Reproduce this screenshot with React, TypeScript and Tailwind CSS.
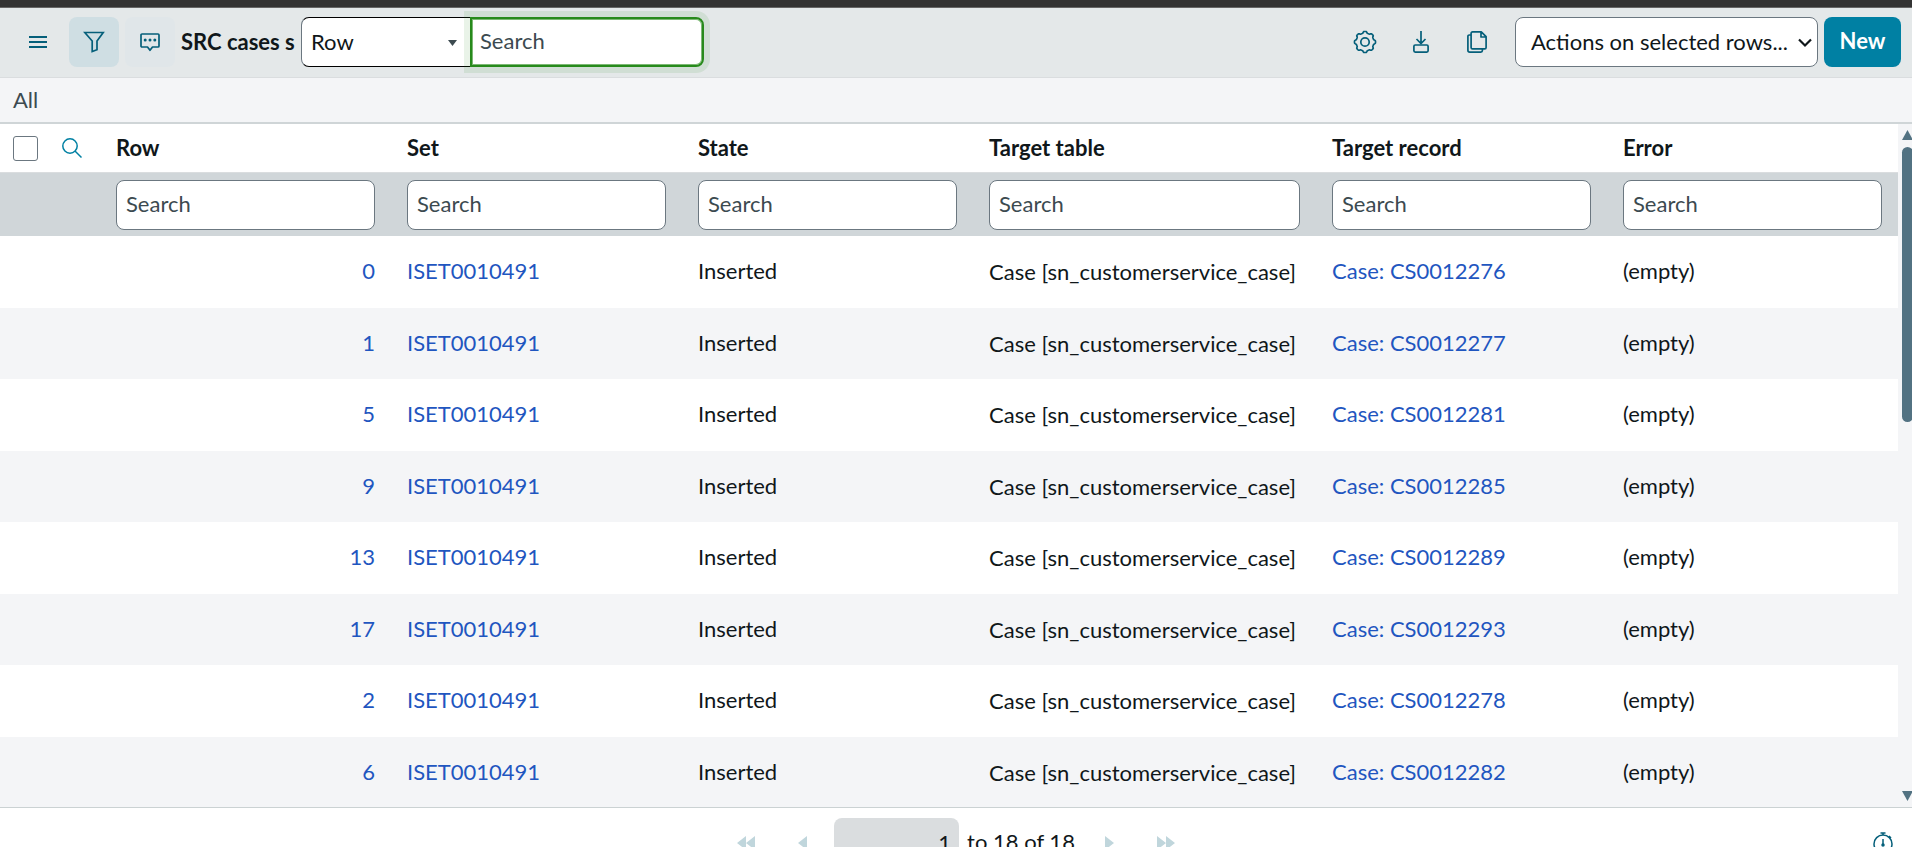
import React from "react";

const rows = [
  { row: 0, record: "CS0012276" },
  { row: 1, record: "CS0012277" },
  { row: 5, record: "CS0012281" },
  { row: 9, record: "CS0012285" },
  { row: 13, record: "CS0012289" },
  { row: 17, record: "CS0012293" },
  { row: 2, record: "CS0012278" },
  { row: 6, record: "CS0012282" },
];

const columns = ["Row", "Set", "State", "Target table", "Target record", "Error"];

// Outline of an eight-toothed gear centred on (12, 12).
const gearPoints = Array.from({ length: 96 }, (_, i) => {
  const angle = (i / 96) * Math.PI * 2;
  const wave = Math.max(-0.8, Math.min(0.8, 1.4 * Math.cos(8 * angle)));
  const radius = 9.7 + wave;
  return `${(12 + radius * Math.cos(angle)).toFixed(2)},${(12 + radius * Math.sin(angle)).toFixed(2)}`;
}).join(" ");

function IconButton({ label, className = "", children }: { label: string; className?: string; children: React.ReactNode }) {
  return (
    <button type="button" aria-label={label} className={`flex size-[50px] shrink-0 items-center justify-center rounded-lg text-[#055f7a] ${className}`}>
      {children}
    </button>
  );
}

function Header() {
  return (
    <header className="flex h-[70px] shrink-0 items-center border-b border-[#dadddf] bg-[#e4e8e9] pr-[11px] pb-[2px] pl-[13px]">
      <IconButton label="List controls">
        <svg width="18" height="12" viewBox="0 0 18 12" stroke="currentColor" strokeWidth="2" fill="none">
          <path d="M0 1h18M0 6h18M0 11h18" />
        </svg>
      </IconButton>
      <IconButton label="Filter" className="ml-[6px] bg-[#cfdee3] text-[#0b2f3c]">
        <svg width="22" height="22" viewBox="0 0 22 22" fill="none" stroke="currentColor" strokeWidth="1.700">
          <path d="M1.800 1.500h18.400L14 10v8.700l-4.800 1.800V10z" />
        </svg>
      </IconButton>
      <IconButton label="Activity" className="ml-[6px] bg-[#e0e6e9]">
        <svg width="20" height="20" viewBox="0 0 20 20" fill="none" stroke="currentColor" strokeWidth="1.700" strokeLinejoin="round">
          <path d="M2 2h16a1 1 0 0 1 1 1v11a1 1 0 0 1-1 1h-5.500L10 18.300 7.500 15H2a1 1 0 0 1-1-1V3a1 1 0 0 1 1-1z" />
          <g fill="currentColor" stroke="none">
            <circle cx="5.200" cy="8" r="1.500" />
            <circle cx="10" cy="8" r="1.500" />
            <circle cx="14.800" cy="8" r="1.500" />
          </g>
        </svg>
      </IconButton>
      <h1 className="ml-[6px] w-[120px] text-[22px] font-bold whitespace-nowrap">SRC cases s</h1>
      <div className="flex">
        <div className="relative">
          <select aria-label="Search field" className="h-[50px] w-[169px] appearance-none rounded-l-lg border-y border-l border-y-black border-l-[#6b7780] bg-white pl-[9px] text-[22px]">
            <option>Row</option>
          </select>
          <svg className="pointer-events-none absolute top-[23px] right-[13px] text-[#3c4a50]" width="9" height="6" viewBox="0 0 9 6" fill="currentColor">
            <path d="M0 0h9L4.500 6z" />
          </svg>
        </div>
        <input aria-label="Search" autoFocus placeholder="Search" className="relative h-[50px] w-[234px] rounded-r-lg border-2 border-[#278a1b] bg-white px-2 pb-[2px] text-[22px] shadow-[0_0_0_6px_rgba(39,138,27,0.1)] ring-1 ring-[#7cb874] outline-none ring-inset placeholder:text-[#3c4a50]" />
      </div>
      <div className="ml-auto flex items-center">
        <IconButton label="Settings">
          <svg width="24" height="24" viewBox="0 0 24 24" fill="none" stroke="currentColor" strokeWidth="1.700" strokeLinejoin="round">
            <polygon points={gearPoints} />
            <circle cx="12" cy="12" r="4.200" />
          </svg>
        </IconButton>
        <IconButton label="Download" className="ml-[6px]">
          <svg width="16" height="22" viewBox="0 0 16 22" fill="none" stroke="currentColor" strokeWidth="1.700">
            <path d="M8 0v12.300M3.500 8 8 12.500 12.500 8" />
            <rect x="0.900" y="14" width="14.200" height="7.100" rx="1.300" />
          </svg>
        </IconButton>
        <IconButton label="Copy" className="ml-[6px]">
          <svg width="20" height="22" viewBox="0 0 20 22" fill="none" stroke="currentColor" strokeWidth="1.700" strokeLinejoin="round">
            <path d="M5.500.9h8.800l4.800 4.800v10.800a1.400 1.400 0 0 1-1.400 1.400H5.500a1.400 1.400 0 0 1-1.400-1.400V2.300A1.400 1.400 0 0 1 5.500.9zM14 1v5h5M4.100 4H2.200A1.300 1.300 0 0 0 .9 5.300v13.900a1.900 1.900 0 0 0 1.900 1.900h11a1.600 1.600 0 0 0 1.600-1.600v-1.600" />
          </svg>
        </IconButton>
        <div className="relative ml-[13px]">
          <select aria-label="Actions on selected rows" className="h-[50px] w-[303px] appearance-none rounded-lg border border-[#6b7780] bg-white pl-[15px] text-[22px]">
            <option>Actions on selected rows...</option>
          </select>
          <svg className="pointer-events-none absolute top-[21px] right-[6px]" width="14" height="10" viewBox="0 0 14 10" fill="none" stroke="currentColor" strokeWidth="2.200">
            <path d="m1 1.500 6 6 6-6" />
          </svg>
        </div>
        <button type="button" className="ml-[6px] h-[50px] w-[77px] rounded-lg bg-[#0080a3] pb-[2px] text-[22px] font-bold text-white">New</button>
      </div>
    </header>
  );
}

function CaseTable() {
  return (
    <table className="w-full table-fixed border-separate border-spacing-0 text-left">
      <colgroup>
        <col className="w-[100px]" />
        <col />
        <col />
        <col />
        <col className="w-[343px]" />
        <col />
        <col />
      </colgroup>
      <thead>
        <tr className="h-[49px]">
          <td className="border-b border-[#dadddf] p-0">
            <div className="flex items-center pl-[13px]">
              <input type="checkbox" aria-label="Select all rows" className="size-[25px] appearance-none rounded-[3px] border border-[#6b7780] bg-white" />
              <button type="button" aria-label="Toggle column search" className="ml-6 text-[#0080a3]">
                <svg width="20" height="20" viewBox="0 0 20 20" fill="none" stroke="currentColor" strokeWidth="1.500">
                  <circle cx="8" cy="8" r="7.200" />
                  <path d="m13 13 6.500 6.500" />
                </svg>
              </button>
            </div>
          </td>
          {columns.map((name) => (
            <th key={name} scope="col" className="border-b border-[#dadddf] px-4 py-0 font-bold">{name}</th>
          ))}
        </tr>
        <tr className="h-[63px] bg-[#d0d6d9]">
          <td />
          {columns.map((name) => (
            <td key={name} className="px-4 py-0">
              <input aria-label={`Search ${name}`} placeholder="Search" className="block h-[50px] w-full rounded-lg border border-[#6b7780] bg-white px-[9px] pb-[2px] placeholder:text-[#3c4a50]" />
            </td>
          ))}
        </tr>
      </thead>
      <tbody>
        {rows.map(({ row, record }) => (
          <tr key={row} className="h-[72px] even:h-[71px] even:bg-[#f4f5f7]">
            <td />
            <td className="px-4 pt-0 pb-[2px] text-right"><a href="#row" className="text-[#1f56c0]">{row}</a></td>
            <td className="px-4 pt-0 pb-[2px]"><a href="#set" className="text-[#1f56c0]">ISET0010491</a></td>
            <td className="px-4 pt-0 pb-[2px]">Inserted</td>
            <td className="px-4 py-0 whitespace-nowrap">Case [sn_customerservice_case]</td>
            <td className="px-4 pt-0 pb-[2px]"><a href="#record" className="text-[#1f56c0]">Case: {record}</a></td>
            <td className="px-4 pt-0 pb-[2px]">(empty)</td>
          </tr>
        ))}
      </tbody>
    </table>
  );
}

function Footer() {
  return (
    <footer className="relative flex h-10 shrink-0 items-start justify-center overflow-hidden border-t border-[#cbd2d3] bg-white pt-[10px]">
      <div className="flex h-[50px] items-center text-[#c0d6dc]">
        <button type="button" aria-label="First page">
          <svg width="18" height="14" viewBox="0 0 18 14" fill="currentColor"><path d="M9 0v14L0 7zM18 0v14L9 7z" /></svg>
        </button>
        <button type="button" aria-label="Previous page" className="ml-[43px]">
          <svg width="9" height="14" viewBox="0 0 9 14" fill="currentColor"><path d="M9 0v14L0 7z" /></svg>
        </button>
        <input aria-label="First row" defaultValue="1" className="ml-[27px] h-[50px] w-[125px] rounded-lg bg-[#dadddf] px-2 pb-[2px] text-right text-[#10171a]" />
        <span className="ml-2 pb-[2px] text-[#10171a]">to 18 of 18</span>
        <button type="button" aria-label="Next page" className="ml-[30px]">
          <svg width="9" height="14" viewBox="0 0 9 14" fill="currentColor"><path d="M0 0v14l9-7z" /></svg>
        </button>
        <button type="button" aria-label="Last page" className="ml-[43px]">
          <svg width="18" height="14" viewBox="0 0 18 14" fill="currentColor"><path d="M0 0v14l9-7zM9 0v14l9-7z" /></svg>
        </button>
      </div>
      <button type="button" aria-label="Response time" className="absolute top-6 right-[19px] text-[#055f7a]">
        <svg width="20" height="24" viewBox="0 0 20 24" fill="none" stroke="currentColor" strokeWidth="1.500">
          <circle cx="10" cy="12" r="9" />
          <path d="M7.500 1h5M10 1v2M10 7v6M16 4l2 2" />
          <circle cx="10" cy="13" r="1" fill="currentColor" />
        </svg>
      </button>
    </footer>
  );
}

export default function App() {
  return (
    <div className="flex h-screen flex-col overflow-hidden bg-white font-['Lato',sans-serif] text-[22px] leading-8 text-[#10171a]">
      <div className="h-2 shrink-0 border-b border-[#666666] bg-[#333333]" />
      <Header />
      <nav aria-label="Breadcrumb" className="flex h-[46px] shrink-0 items-center border-b-2 border-[#cfd5d7] bg-[#f4f5f7] pl-[13px]">
        <a href="#all" className="text-[#3c4a50]">All</a>
      </nav>
      <main className="flex min-h-0 flex-1 overflow-hidden">
        <div className="min-w-0 flex-1">
          <CaseTable />
        </div>
        <div className="flex w-[14px] shrink-0 flex-col overflow-hidden bg-[#f4f5f7] pt-[6px] pb-[6px] pl-1" aria-hidden="true">
          <svg className="shrink-0 text-[#527282]" width="11" height="10" viewBox="0 0 11 10" fill="currentColor"><path d="M5.500 0 11 10H0z" /></svg>
          <div className="mt-[7px] h-[275px] w-[11px] shrink-0 rounded-full bg-[#527282]" />
          <svg className="mt-auto shrink-0 text-[#527282]" width="11" height="10" viewBox="0 0 11 10" fill="currentColor"><path d="M0 0h11L5.500 10z" /></svg>
        </div>
      </main>
      <Footer />
    </div>
  );
}
